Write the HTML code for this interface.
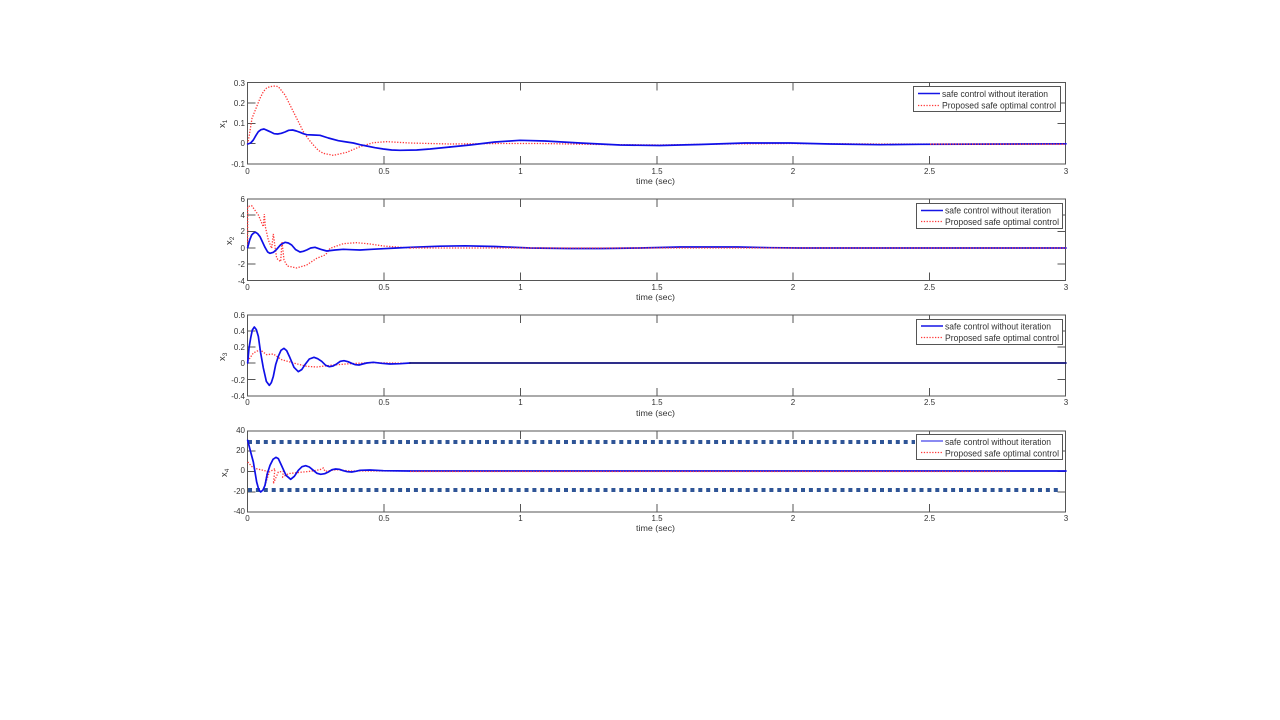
<!DOCTYPE html>
<html lang="en">
<head>
<meta charset="utf-8">
<title>Safe control plots</title>
<style>
html,body{margin:0;padding:0;background:#fff;width:1280px;height:720px;overflow:hidden}
svg{display:block;filter:blur(.35px)}
text{font-family:"Liberation Sans",Arial,sans-serif;font-size:8px;fill:#333}
.ax{fill:none;stroke:#555;stroke-width:1}
.tk{fill:none;stroke:#555;stroke-width:1}
.b{fill:none;stroke:#0f0fe8;stroke-width:1.700;stroke-linejoin:round;stroke-linecap:round;vector-effect:non-scaling-stroke}
.r{fill:none;stroke:#ff3838;stroke-width:1.300;stroke-dasharray:1.300 1.500;vector-effect:non-scaling-stroke}
.d{fill:none;stroke:#2f5597;stroke-width:4;stroke-dasharray:4 3.900}
.lg{fill:#fff;stroke:#555;stroke-width:1}
.m{text-anchor:middle}
.e{text-anchor:end}
.lt{font-size:9px}
.sub{font-size:6.500px}
.yl{font-size:9.500px}
</style>
</head>
<body>
<svg width="1280" height="720" viewBox="0 0 1280 720" xmlns="http://www.w3.org/2000/svg">

<!-- Plot 1 -->
<path class="ax" d="M247.500 82.500H1065.500V164H247.500Z"/>
<path class="tk" d="M384 164v-8M520.500 164v-8M657 164v-8M793 164v-8M929.500 164v-8M384 82.500v8M520.500 82.500v8M657 82.500v8M793 82.500v8M929.500 82.500v8M247.500 103h8M247.500 123.500h8M247.500 143.500h8M1065.500 103h-8M1065.500 123.500h-8M1065.500 143.500h-8"/>
<g transform="translate(210,75) scale(.33333)">
<polyline class="r" points="113,207 118,180 126,130 140,95 150,70 160,50 170,39 180,35 195,33 205,35 225,60 250,110 280,170 295,192 310,210 325,226 340,235 370,241 410,232 450,215 490,203 530,200 600,204 720,207"/>
<polyline class="b" points="113,207 122,204 130,195 138,181 145,170 153,164 162,162 171,166 180,170 192,176 203,177 214,175 225,171 236,166 248,165 259,168 270,172 280,176 290,179 310,180 330,181 355,189 385,197 410,201 430,204 450,209 470,213 495,218 520,222 545,225 570,226 620,225 660,222 690,219 720,216"/>
</g>
<polyline class="r" points="450,144 500,143.500 540,143.500 600,144.500 660,145 720,144 790,143.500 880,144 1066,144"/>
<polyline class="b" points="450,147 470,145 495,142 520,140.300 545,141 580,143 620,145 660,145.500 700,144.500 745,143 790,143 830,144 880,144.700 920,144.300 1066,143.800"/>
<polyline class="r" points="930,144.200 1065,144.200"/>

<!-- Plot 2 -->
<path class="ax" d="M247.500 199H1065.500V280.500H247.500Z"/>
<path class="tk" d="M384 280.500v-8M520.500 280.500v-8M657 280.500v-8M793 280.500v-8M929.500 280.500v-8M384 199v8M520.500 199v8M657 199v8M793 199v8M929.500 199v8M247.500 215h8M247.500 231.500h8M247.500 248h8M247.500 264h8M1065.500 215h-8M1065.500 231.500h-8M1065.500 248h-8M1065.500 264h-8"/>
<g transform="translate(210,190) scale(.33333)">
<polyline class="r" points="113,173 113,50 125,47 145,75 160,110 163,72 166,110 175,150 185,175 190,132 195,170 200,205 212,215 216,155 222,210 232,228 260,234 290,225 320,205 345,195 350,190 360,175 400,161 440,158 480,162 520,168 600,174"/>
<polyline class="b" points="113,173 119,150 125,135 131,129 137,127 143,131 150,140 165,172 173,186 180,190 190,187 200,178 212,164 225,157 235,159 245,165 257,179 270,186 280,184 290,180 302,174 315,172 332,178 350,183 375,180 400,178 425,179 450,180 485,178 520,176 560,174 600,172"/>
</g>
<polyline class="b" points="410,247.300 440,246.200 465,245.800 495,246.500 530,248 570,248.500 602,248.500 640,248 680,247 738,247 770,247.700 800,248 1066,248"/>
<polyline class="r" points="410,248 1066,248"/>

<!-- Plot 3 -->
<path class="ax" d="M247.500 315H1065.500V396H247.500Z"/>
<path class="tk" d="M384 396v-8M520.500 396v-8M657 396v-8M793 396v-8M929.500 396v-8M384 315v8M520.500 315v8M657 315v8M793 315v8M929.500 315v8M247.500 331h8M247.500 347h8M247.500 363h8M247.500 379.500h8M1065.500 331h-8M1065.500 347h-8M1065.500 363h-8M1065.500 379.500h-8"/>
<g transform="translate(210,308) scale(.33333)">
<polyline class="r" points="113,160 130,135 150,125 170,140 190,138 215,155 250,165 290,175 320,177 360,172 420,167 480,164 600,166"/>
<polyline class="b" points="113,165 117,120 122,90 127,66 133,57 139,65 145,85 152,135 160,180 169,220 178,232 184,224 190,205 197,170 205,145 213,127 222,121 230,128 238,145 252,178 265,191 275,185 285,170 298,153 312,148 323,152 335,160 347,172 358,176 369,174 380,168 391,160 402,158 414,161 425,166 436,170 447,171 458,168 470,165 490,163 515,166 540,168 570,167 600,165"/>
</g>
<polyline class="b" points="410,363 1066,363" style="stroke:#10107a"/>

<!-- Plot 4 -->
<path class="ax" d="M247.500 431H1065.500V512H247.500Z"/>
<path class="tk" d="M384 512v-8M520.500 512v-8M657 512v-8M793 512v-8M929.500 512v-8M384 431v8M520.500 431v8M657 431v8M793 431v8M929.500 431v8M247.500 451h8M247.500 471.500h8M247.500 492h8M1065.500 451h-8M1065.500 471.500h-8M1065.500 492h-8"/>
<polyline class="d" points="248,442 915,442"/>
<polyline class="d" points="248,490 1060,490"/>
<g transform="translate(210,422) scale(.33333)">
<polyline class="r" points="113,120 130,138 160,145 172,148 165,190 178,150 195,140 190,185 205,150 220,148 218,165 235,155 260,152 300,148 330,143 340,138 345,148 380,143 420,147 600,147"/>
<polyline class="b" points="113,55 122,90 130,120 140,180 146,202 152,210 159,204 165,190 172,155 180,130 189,112 198,106 205,110 212,125 228,160 242,172 253,163 265,145 276,134 287,131 298,135 310,145 321,154 332,157 344,155 355,150 366,143 377,141 388,142 400,146 412,149 425,150 437,148 450,145 480,144 520,146 600,147"/>
</g>
<polyline class="b" points="410,471 1066,471"/>
<polyline class="r" points="410,471.500 1010,471.500"/>

<!-- X tick labels -->
<text class="m" x="247.500" y="174">0</text><text class="m" x="384" y="174">0.5</text><text class="m" x="520.500" y="174">1</text><text class="m" x="657" y="174">1.5</text><text class="m" x="793" y="174">2</text><text class="m" x="929.500" y="174">2.5</text><text class="m" x="1066" y="174">3</text>
<text class="m" x="655.500" y="184" textLength="39" lengthAdjust="spacingAndGlyphs">time (sec)</text>

<text class="m" x="247.500" y="290">0</text><text class="m" x="384" y="290">0.5</text><text class="m" x="520.500" y="290">1</text><text class="m" x="657" y="290">1.5</text><text class="m" x="793" y="290">2</text><text class="m" x="929.500" y="290">2.5</text><text class="m" x="1066" y="290">3</text>
<text class="m" x="655.500" y="300" textLength="39" lengthAdjust="spacingAndGlyphs">time (sec)</text>

<text class="m" x="247.500" y="405">0</text><text class="m" x="384" y="405">0.5</text><text class="m" x="520.500" y="405">1</text><text class="m" x="657" y="405">1.5</text><text class="m" x="793" y="405">2</text><text class="m" x="929.500" y="405">2.5</text><text class="m" x="1066" y="405">3</text>
<text class="m" x="655.500" y="416" textLength="39" lengthAdjust="spacingAndGlyphs">time (sec)</text>

<text class="m" x="247.500" y="521">0</text><text class="m" x="384" y="521">0.5</text><text class="m" x="520.500" y="521">1</text><text class="m" x="657" y="521">1.5</text><text class="m" x="793" y="521">2</text><text class="m" x="929.500" y="521">2.5</text><text class="m" x="1066" y="521">3</text>
<text class="m" x="655.500" y="531" textLength="39" lengthAdjust="spacingAndGlyphs">time (sec)</text>

<!-- Y tick labels -->
<text class="e" x="245" y="86">0.3</text><text class="e" x="245" y="106">0.2</text><text class="e" x="245" y="126">0.1</text><text class="e" x="245" y="146">0</text><text class="e" x="245" y="167">-0.1</text>
<text class="e" x="245" y="202">6</text><text class="e" x="245" y="218">4</text><text class="e" x="245" y="234">2</text><text class="e" x="245" y="251">0</text><text class="e" x="245" y="267">-2</text><text class="e" x="245" y="284">-4</text>
<text class="e" x="245" y="318">0.6</text><text class="e" x="245" y="334">0.4</text><text class="e" x="245" y="350">0.2</text><text class="e" x="245" y="366">0</text><text class="e" x="245" y="383">-0.2</text><text class="e" x="245" y="399">-0.4</text>
<text class="e" x="245" y="433">40</text><text class="e" x="245" y="453">20</text><text class="e" x="245" y="473">0</text><text class="e" x="245" y="494">-20</text><text class="e" x="245" y="514">-40</text>

<!-- Y axis labels -->
<text class="yl" transform="translate(225,128) rotate(-90)">x<tspan dy="2" class="sub">1</tspan></text>
<text class="yl" transform="translate(232,245) rotate(-90)">x<tspan dy="2" class="sub">2</tspan></text>
<text class="yl" transform="translate(225,361) rotate(-90)">x<tspan dy="2" class="sub">3</tspan></text>
<text class="yl" transform="translate(227,477) rotate(-90)">x<tspan dy="2" class="sub">4</tspan></text>

<!-- Legend 1 -->
<rect class="lg" x="913.500" y="86.500" width="147" height="25"/>
<path d="M918 93.500H940" stroke="#1515e6" stroke-width="1.500" fill="none"/>
<path class="r" d="M918 105.500H940"/>
<text class="lt" x="942" y="97" textLength="106" lengthAdjust="spacingAndGlyphs">safe control without iteration</text>
<text class="lt" x="942" y="108.500" textLength="114" lengthAdjust="spacingAndGlyphs">Proposed safe optimal control</text>

<!-- Legend 2 -->
<rect class="lg" x="916.500" y="203.500" width="146" height="25"/>
<path d="M921 210.500H943" stroke="#1515e6" stroke-width="1.500" fill="none"/>
<path class="r" d="M921 221.500H943"/>
<text class="lt" x="945" y="213.500" textLength="106" lengthAdjust="spacingAndGlyphs">safe control without iteration</text>
<text class="lt" x="945" y="225" textLength="114" lengthAdjust="spacingAndGlyphs">Proposed safe optimal control</text>

<!-- Legend 3 -->
<rect class="lg" x="916.500" y="319.500" width="146" height="25"/>
<path d="M921 326H943" stroke="#1515e6" stroke-width="1.500" fill="none"/>
<path class="r" d="M921 337.500H943"/>
<text class="lt" x="945" y="329.500" textLength="106" lengthAdjust="spacingAndGlyphs">safe control without iteration</text>
<text class="lt" x="945" y="341" textLength="114" lengthAdjust="spacingAndGlyphs">Proposed safe optimal control</text>

<!-- Legend 4 -->
<rect class="lg" x="916.500" y="434.500" width="146" height="25"/>
<path d="M921 441H943" stroke="#1515e6" stroke-width="1" fill="none"/>
<path class="r" d="M921 452.500H943"/>
<text class="lt" x="945" y="445" textLength="106" lengthAdjust="spacingAndGlyphs">safe control without iteration</text>
<text class="lt" x="945" y="456.500" textLength="114" lengthAdjust="spacingAndGlyphs">Proposed safe optimal control</text>
</svg>
</body>
</html>
